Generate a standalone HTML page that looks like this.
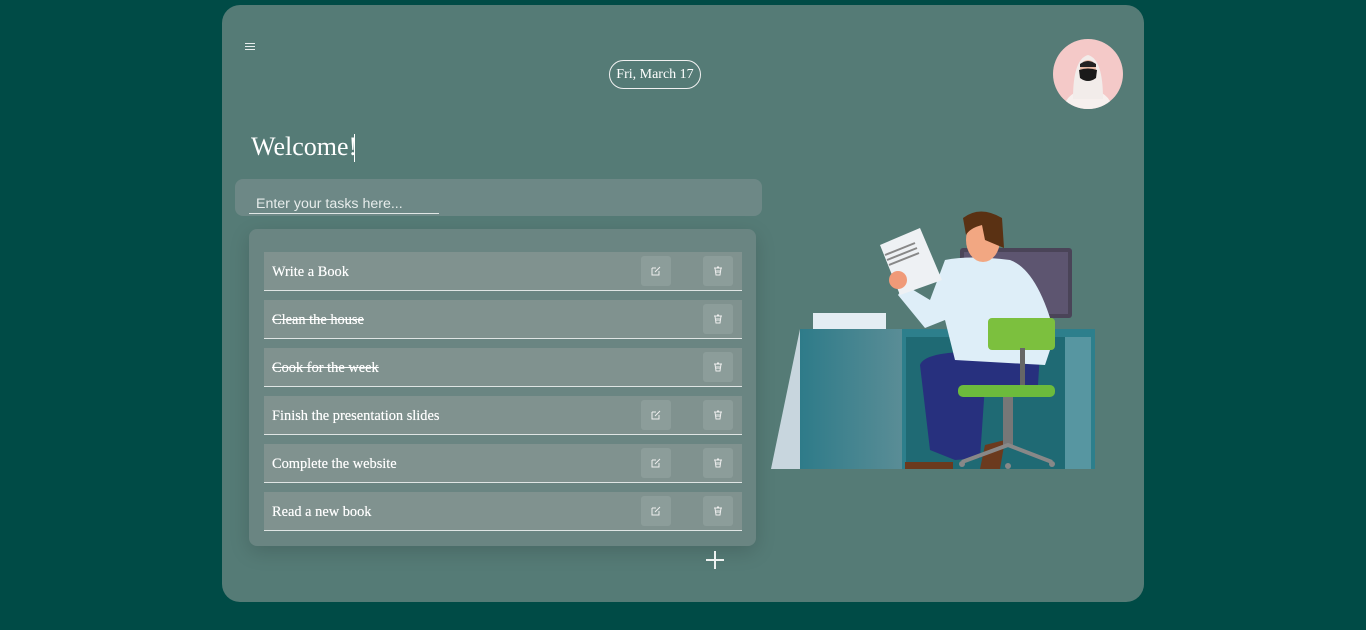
<!DOCTYPE html>
<html><head><style>
body{margin:0;background:#004b46;width:1366px;height:630px;overflow:hidden;font-family:"Liberation Serif",serif;}
.card{position:absolute;left:222px;top:5px;width:922px;height:597px;border-radius:18px;background:#557b76;}
.menu{position:absolute;left:245px;top:43px;width:10px;}
.menu i{display:block;height:1px;background:#e8eeee;margin-bottom:2px}
.date{position:absolute;left:609px;top:60px;width:90px;height:27px;border:1.3px solid #f0f0f0;border-radius:15px;color:#fff;font-size:14px;line-height:27px;text-align:center}
.av{position:absolute;left:1053px;top:39px;width:70px;height:70px;border-radius:50%;background:#f4c9c8;overflow:hidden}
h1{position:absolute;left:251px;top:132px;margin:0;font-weight:normal;font-size:26px;color:#fff;}
.caret{position:absolute;left:354px;top:134px;width:1px;height:28px;background:#fff}
.inp{position:absolute;left:235px;top:179px;width:527px;height:37px;border-radius:8px;background:#6d8886}
.inp span{position:absolute;left:21px;top:17px;font-family:"Liberation Sans",sans-serif;font-size:14.2px;color:#e6eceb}
.inp b{position:absolute;left:14px;top:34px;width:190px;height:1px;background:#e0e6e5}
.panel{position:absolute;left:249px;top:229px;width:507px;height:317px;border-radius:8px;background:#6a8582;box-shadow:0 6px 20px rgba(0,0,0,.15)}
.row{position:absolute;left:264px;width:478px;height:38px;background:#80928f;border-bottom:1.5px solid #dfe5e4;color:#fff;font-size:14.4px;}
.row span{position:absolute;left:8px;top:12px;text-shadow:0 0 .4px #fff}
.row s{text-decoration:line-through}
.btn{position:absolute;top:4px;width:30px;height:30px;border-radius:3px;background:#8c9d9a}
.btn svg{position:absolute;left:10px;top:10px}
.plus{position:absolute;left:706px;top:551px;width:18px;height:18px}
.plus:before,.plus:after{content:"";position:absolute;background:#eef2f1}
.plus:before{left:8px;top:0;width:1.5px;height:18px}
.plus:after{top:8px;left:0;height:1.5px;width:18px}
</style></head><body>
<div class="card"></div>
<div class="menu"><i></i><i></i><i></i></div>
<div class="date">Fri, March 17</div>
<div class="av"><svg width="70" height="70">
<path d="M10 70 Q14 52 35 50 Q56 52 60 70Z" fill="#f7f0ee"/>
<path d="M20 60 Q20 20 35 16 Q50 20 50 60Z" fill="#f2ecea"/>
<ellipse cx="35" cy="31" rx="8" ry="10" fill="#e7b9a4"/>
<path d="M26 31 Q35 28 44 31 L43 39 Q35 45 27 39Z" fill="#1a1a1a"/>
<path d="M27 25 Q35 19 43 25 L43 28 L27 28Z" fill="#222"/>
</svg></div>
<h1>Welcome!</h1><div class="caret"></div>
<div class="inp"><span>Enter your tasks here...</span><b></b></div>
<div class="panel"></div>

<div class="row" style="top:252px"><span>Write a Book</span><div class="btn" style="left:377px"><svg width="10" height="10"><path d="M1 2H5M1 2V9H8V5M4 6L9 1" stroke="#eee" fill="none" stroke-width="1"/></svg></div><div class="btn" style="left:439px"><svg width="10" height="10"><path d="M1 2H9M4 1H6M2 2L3 9H7L8 2M4 4V7M6 4V7" stroke="#eee" fill="none" stroke-width="1"/></svg></div></div>
<div class="row" style="top:300px"><span><s>Clean the house</s></span><div class="btn" style="left:439px"><svg width="10" height="10"><path d="M1 2H9M4 1H6M2 2L3 9H7L8 2M4 4V7M6 4V7" stroke="#eee" fill="none" stroke-width="1"/></svg></div></div>
<div class="row" style="top:348px"><span><s>Cook for the week</s></span><div class="btn" style="left:439px"><svg width="10" height="10"><path d="M1 2H9M4 1H6M2 2L3 9H7L8 2M4 4V7M6 4V7" stroke="#eee" fill="none" stroke-width="1"/></svg></div></div>
<div class="row" style="top:396px"><span>Finish the presentation slides</span><div class="btn" style="left:377px"><svg width="10" height="10"><path d="M1 2H5M1 2V9H8V5M4 6L9 1" stroke="#eee" fill="none" stroke-width="1"/></svg></div><div class="btn" style="left:439px"><svg width="10" height="10"><path d="M1 2H9M4 1H6M2 2L3 9H7L8 2M4 4V7M6 4V7" stroke="#eee" fill="none" stroke-width="1"/></svg></div></div>
<div class="row" style="top:444px"><span>Complete the website</span><div class="btn" style="left:377px"><svg width="10" height="10"><path d="M1 2H5M1 2V9H8V5M4 6L9 1" stroke="#eee" fill="none" stroke-width="1"/></svg></div><div class="btn" style="left:439px"><svg width="10" height="10"><path d="M1 2H9M4 1H6M2 2L3 9H7L8 2M4 4V7M6 4V7" stroke="#eee" fill="none" stroke-width="1"/></svg></div></div>
<div class="row" style="top:492px"><span>Read a new book</span><div class="btn" style="left:377px"><svg width="10" height="10"><path d="M1 2H5M1 2V9H8V5M4 6L9 1" stroke="#eee" fill="none" stroke-width="1"/></svg></div><div class="btn" style="left:439px"><svg width="10" height="10"><path d="M1 2H9M4 1H6M2 2L3 9H7L8 2M4 4V7M6 4V7" stroke="#eee" fill="none" stroke-width="1"/></svg></div></div>
<div class="plus"></div>

<svg style="position:absolute;left:770px;top:200px" width="340" height="280" viewBox="0 0 340 280">
<defs><linearGradient id="d" x1="0" x2="1"><stop offset="0" stop-color="#2e7b89"/><stop offset="1" stop-color="#5a8d96"/></linearGradient></defs>
<rect x="190" y="48" width="112" height="70" rx="3" fill="#4a4458"/>
<rect x="194" y="52" width="104" height="62" fill="#5d5570"/>
<path d="M30 129 L1 269 L30 269Z" fill="#c8d6de"/>
<rect x="30" y="129" width="102" height="140" fill="url(#d)"/>
<rect x="132" y="129" width="193" height="140" fill="#2d7f8c"/>
<rect x="136" y="137" width="185" height="132" fill="#1f6a74"/>
<path d="M295 137 L321 137 L321 269 L295 269Z" fill="#5796a1"/>
<rect x="43" y="113" width="73" height="16" fill="#e4edf3"/>
<path d="M150 165 Q155 150 220 152 L270 152 L268 185 L215 185 L210 258 L185 260 L160 250Z" fill="#27307e"/>
<path d="M135 262 L183 262 L183 269 L135 269Z" fill="#6b3a1e"/>
<path d="M215 245 L235 240 L230 269 L210 269Z" fill="#6b3a1e"/>
<path d="M175 60 Q200 55 240 60 Q268 70 285 135 L275 165 L185 160 L175 120 L155 128 L128 95 L135 85 L160 100Z" fill="#deeef8"/>
<path d="M110 45 L150 28 L172 80 L130 95Z" fill="#eef1f4"/>
<path d="M115 55 L145 43 M117 60 L147 48 M119 65 L149 53" stroke="#888" stroke-width="2"/>
<circle cx="128" cy="80" r="9" fill="#f09a78"/>
<ellipse cx="213" cy="40" rx="17" ry="22" fill="#f2a782"/>
<path d="M193 18 Q210 5 232 18 L234 48 L215 40 L212 25 Q200 28 196 35Z" fill="#5a3113"/>
<rect x="218" y="118" width="67" height="32" rx="4" fill="#7cc03e"/>
<rect x="250" y="148" width="5" height="38" fill="#666"/>
<rect x="188" y="185" width="97" height="12" rx="5" fill="#6cbb3c"/>
<rect x="233" y="197" width="10" height="50" fill="#777"/>
<path d="M192 262 L238 245 L282 262" stroke="#888" stroke-width="4" fill="none"/>
<circle cx="192" cy="264" r="3" fill="#888"/><circle cx="282" cy="264" r="3" fill="#888"/><circle cx="238" cy="266" r="3" fill="#888"/>
</svg>
</body></html>
